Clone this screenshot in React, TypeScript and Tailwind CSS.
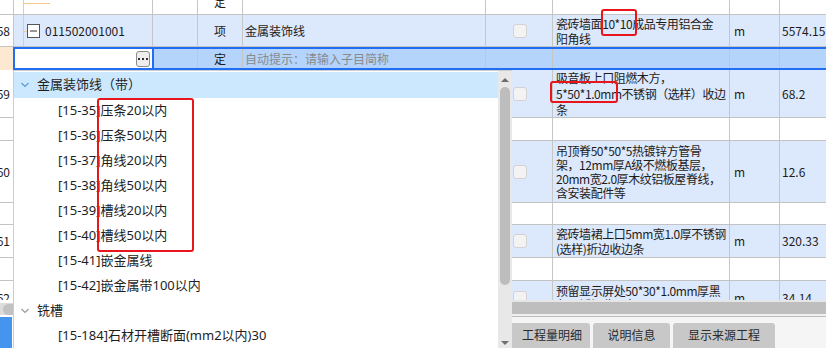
import React from "react";

// grid text imitates the SimSun 12px cells
const gridFont = "font-['Noto_Sans_CJK_SC',sans-serif] text-[12px] text-[#1c1c1c]";
const panelFont = "font-['Noto_Sans','Noto_Sans_CJK_SC',sans-serif] text-[13px] text-[#1e1e1e]";
const line = "border-r border-[#c6c6c6]";

interface Row {
  num?: string;
  h: string;
  blue: boolean;
  lead?: string;
  desc?: string[];
  unit?: string;
  qty?: string;
}

const rows: Row[] = [
  {
    num: "59",
    h: "h-[48px]",
    blue: true,
    lead: "leading-[16px]",
    desc: ["吸音板上口阻燃木方，", "5*50*1.0mm不锈钢（选样）收边", "条"],
    unit: "m",
    qty: "68.2",
  },
  { h: "h-[23px]", blue: false },
  {
    num: "60",
    h: "h-[62px]",
    blue: true,
    lead: "leading-[14px]",
    desc: ["吊顶脊50*50*5热镀锌方管骨", "架，12mm厚A级不燃板基层，", "20mm宽2.0厚木纹铝板屋脊线，", "含安装配件等"],
    unit: "m",
    qty: "12.6",
  },
  { h: "h-[22px]", blue: false },
  {
    num: "61",
    h: "h-[33px]",
    blue: true,
    lead: "leading-[15px]",
    desc: ["瓷砖墙裙上口5mm宽1.0厚不锈钢", "(选样)折边收边条"],
    unit: "m",
    qty: "320.33",
  },
  { h: "h-[23px]", blue: false },
  {
    num: "62",
    h: "h-[34px]",
    blue: true,
    lead: "leading-[14px]",
    desc: ["预留显示屏处50*30*1.0mm厚黑", "色不锈钢收口条"],
    unit: "m",
    qty: "34.14",
  },
];

const group1 = [
  "[15-35]压条20以内",
  "[15-36]压条50以内",
  "[15-37]角线20以内",
  "[15-38]角线50以内",
  "[15-39]槽线20以内",
  "[15-40]槽线50以内",
  "[15-41]嵌金属线",
  "[15-42]嵌金属带100以内",
];

function Check() {
  return <div className="ml-[27px] w-[14px] h-[14px] rounded-[3px] border border-[#d3d3d3] bg-[#f3f3f3]" />;
}

function Chevron({ color }: { color: string }) {
  return (
    <svg width="8" height="6" viewBox="0 0 8 6" className="shrink-0">
      <path d="M0.5 1L4 4.5L7.5 1" stroke={color} strokeWidth="1.2" fill="none" />
    </svg>
  );
}

function DataRow({ row }: { row: Row }) {
  const bg = row.blue ? "bg-[#dce8fb]" : "bg-white";
  return (
    <div className={`flex shrink-0 border-b border-[#c3c3c3] ${row.h}`}>
      <div className={`w-[14px] shrink-0 flex items-center justify-end pr-[3px] overflow-hidden whitespace-nowrap bg-white ${line}`}>
        {row.num}
      </div>
      <div className={`w-[139px] shrink-0 ${bg} ${line}`} />
      <div className={`w-[45px] shrink-0 ${bg} ${line}`} />
      <div className={`w-[45px] shrink-0 ${bg} ${line}`} />
      <div className={`w-[243px] shrink-0 ${bg} ${line}`} />
      <div className={`w-[67px] shrink-0 flex items-center ${bg} ${line}`}>{row.num && <Check />}</div>
      <div className={`w-[177px] shrink-0 flex flex-col justify-center pl-[3px] tracking-[-0.45px] overflow-hidden whitespace-nowrap ${row.lead ?? ""} ${bg} ${line}`}>
        {row.desc?.map((d) => (
          <div key={d}>{d}</div>
        ))}
      </div>
      <div className={`w-[50px] shrink-0 flex items-center pl-[4px] ${bg} ${line}`}>{row.unit}</div>
      <div className={`w-[46px] shrink-0 flex items-center pl-[2px] overflow-hidden whitespace-nowrap ${bg}`}>{row.qty}</div>
    </div>
  );
}

export default function App() {
  return (
    <div className="relative w-[826px] h-[348px] overflow-hidden bg-white">
      {/* spreadsheet */}
      <div className={`flex flex-col h-[300px] overflow-hidden ${gridFont}`}>
        {/* tail of the row above */}
        <div className="flex h-[15px] shrink-0 border-b border-[#c3c3c3]">
          <div className={`w-[14px] shrink-0 ${line}`} />
          <div className={`w-[139px] shrink-0 overflow-hidden ${line}`}>
            <svg width="40" height="14">
              <path d="M9.5 0V14M9.5 3.5H36" stroke="#f5c88c" fill="none" />
            </svg>
          </div>
          <div className={`w-[45px] shrink-0 ${line}`} />
          <div className={`w-[45px] shrink-0 flex justify-center overflow-hidden ${line}`}>
            <span className="relative -top-[5px] leading-[14px]">定</span>
          </div>
          <div className={`w-[243px] shrink-0 ${line}`} />
          <div className={`w-[67px] shrink-0 ${line}`} />
          <div className={`w-[177px] shrink-0 ${line}`} />
          <div className={`w-[50px] shrink-0 ${line}`} />
          <div className="w-[46px] shrink-0" />
        </div>

        {/* row 58 */}
        <div className="flex h-[32px] shrink-0 border-b border-[#c3c3c3]">
          <div className={`w-[14px] shrink-0 flex items-center justify-end pr-[3px] overflow-hidden whitespace-nowrap bg-white ${line}`}>
            58
          </div>
          <div className={`w-[139px] shrink-0 flex items-center bg-[#dce8fb] ${line}`}>
            <svg width="30" height="31" className="shrink-0">
              <path d="M9.5 0V31M9.5 16.5H13" stroke="#f5c88c" fill="none" />
              <rect x="13.5" y="9.5" width="12" height="13" fill="#fff" stroke="#555" />
              <path d="M16 16H23" stroke="#333" />
            </svg>
            <span className="ml-[1px]">011502001001</span>
          </div>
          <div className={`w-[45px] shrink-0 bg-[#dce8fb] ${line}`} />
          <div className={`w-[45px] shrink-0 flex items-center justify-center bg-[#dce8fb] ${line}`}>项</div>
          <div className={`w-[243px] shrink-0 flex items-center pl-[2px] bg-[#dce8fb] ${line}`}>金属装饰线</div>
          <div className={`w-[67px] shrink-0 flex items-center bg-[#dce8fb] ${line}`}>
            <Check />
          </div>
          <div className={`w-[177px] shrink-0 flex flex-col justify-center pl-[3px] leading-[15px] tracking-[-0.45px] whitespace-nowrap overflow-hidden bg-[#dce8fb] ${line}`}>
            <div>瓷砖墙面10*10成品专用铝合金</div>
            <div>阳角线</div>
          </div>
          <div className={`w-[50px] shrink-0 flex items-center pl-[4px] bg-[#dce8fb] ${line}`}>m</div>
          <div className="w-[46px] shrink-0 flex items-center pl-[2px] bg-[#dce8fb] whitespace-nowrap overflow-hidden">5574.15</div>
        </div>

        {/* editing row */}
        <div className="flex h-[23px] shrink-0">
          <div className="w-[13px] shrink-0 bg-[#fde8d2]" />
          <div className="flex flex-1 border-y-2 border-[#1f6ef4] bg-[#b4d4fc]">
            <div className="w-[141px] shrink-0 flex items-center justify-end pr-[2px] bg-white border-x-2 border-[#1f6ef4]">
              <div className="w-[14px] h-[16px] rounded-[3px] border border-[#8c8c8c] bg-[#eeeeee] flex items-center justify-center gap-[2px]">
                <span className="w-[2px] h-[2px] bg-[#333]" />
                <span className="w-[2px] h-[2px] bg-[#333]" />
                <span className="w-[2px] h-[2px] bg-[#333]" />
              </div>
            </div>
            <div className={`w-[44px] shrink-0 ${line}`} />
            <div className={`w-[45px] shrink-0 flex items-center justify-center ${line}`}>定</div>
            <div className={`w-[243px] shrink-0 flex items-center pl-[2px] text-[#8a8a8a] ${line}`}>自动提示：请输入子目简称</div>
            <div className={`w-[67px] shrink-0 ${line}`} />
            <div className={`w-[177px] shrink-0 ${line}`} />
            <div className={`w-[50px] shrink-0 ${line}`} />
            <div className="flex-1" />
          </div>
        </div>

        {rows.map((r, i) => (
          <DataRow key={i} row={r} />
        ))}
      </div>

      {/* scroll bar strip and bottom tabs */}
      <div className="flex h-[48px]">
        <div className="w-[14px] shrink-0 flex flex-col">
          <div className="h-[3px] bg-white" />
          <div className="h-[12px] bg-[#dcdcdc] flex items-center">
            <div className="ml-[3px] w-[11px] h-[11px] rounded-l-full bg-[#c2c2c2]" />
          </div>
          <div className="h-[2px] bg-white" />
          <div className="flex-1 w-[12px] bg-[#4595ef]" />
        </div>
        <div className="flex-1 flex flex-col">
          <div className="h-[2px] bg-[#e6e6e6]" />
          <div className="h-[12px] bg-[#bebebe]" />
          <div className="h-[2px] bg-[#f0f0f0]" />
          <div className="h-[1px] bg-[#bcbcbc]" />
          <div className="flex-1 bg-[#f5f5f5] pt-[6px] pl-[486px] flex gap-[3px] font-['Noto_Sans','Noto_Sans_CJK_SC',sans-serif] text-[12px] text-[#2a2a2a]">
            <div className="w-[90px] rounded-t-[3px] bg-[#c8c8c8] flex items-center justify-center pl-[14px]">工程量明细</div>
            <div className="w-[77px] rounded-t-[3px] bg-[#c8c8c8] flex items-center justify-center">说明信息</div>
            <div className="w-[102px] rounded-t-[3px] bg-[#c8c8c8] flex items-center justify-center">显示来源工程</div>
          </div>
        </div>
      </div>

      {/* auto-complete dropdown */}
      <div className={`absolute left-[13px] top-[70px] w-[499px] h-[278px] flex bg-white border-l border-t border-[#cdcdcd] ${panelFont}`}>
        <div className="flex-1 flex flex-col pt-[1px] whitespace-nowrap overflow-hidden">
          <div className="h-[26px] shrink-0 flex items-center pl-[7px] bg-[#cce8ff]">
            <Chevron color="#5b9bd5" />
            <span className="ml-[8px]">金属装饰线（带）</span>
          </div>
          {group1.map((t) => (
            <div key={t} className="h-[25px] shrink-0 flex items-center pl-[44px]">
              {t}
            </div>
          ))}
          <div className="h-[25px] shrink-0 flex items-center pl-[7px]">
            <Chevron color="#9a9a9a" />
            <span className="ml-[8px]">铣槽</span>
          </div>
          <div className="h-[25px] shrink-0 flex items-center pl-[44px]">[15-184]石材开槽断面(mm2以内)30</div>
        </div>
        <div className="w-[14px] shrink-0 flex flex-col items-center bg-[#e8e8e8]">
          <svg width="10" height="14" viewBox="0 0 10 14" className="shrink-0">
            <path d="M1 11L5 7L9 11Z" fill="#6e6e6e" />
          </svg>
          <div className="mt-[2px] w-[10px] h-[198px] rounded-full bg-[#bdbdbd]" />
          <div className="flex-1" />
          <svg width="10" height="8" viewBox="0 0 10 8" className="shrink-0">
            <path d="M1 1L5 5L9 1Z" fill="#6e6e6e" />
          </svg>
        </div>
      </div>

      {/* red annotation boxes */}
      <div className="absolute left-[601px] top-[9px] w-[36px] h-[27px] border-2 border-[#e8161c] rounded-[3px]" />
      <div className="absolute left-[550px] top-[81px] w-[68px] h-[22px] border-2 border-[#e8161c] rounded-[3px]" />
      <div className="absolute left-[97px] top-[98px] w-[97px] h-[154px] border-2 border-[#e8161c] rounded-[3px]" />
    </div>
  );
}
